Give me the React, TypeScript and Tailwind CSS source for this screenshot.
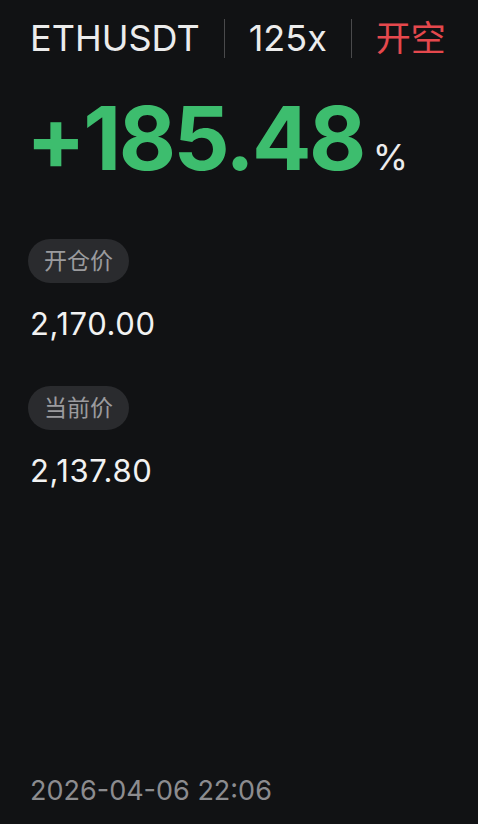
import React from 'react';

const sans = "font-['Inter','Noto_Sans_CJK_SC',sans-serif]";

function PriceBlock({ label, value }: { label: string; value: string }) {
  return (
    <div className="flex flex-col items-start">
      <span className="-ml-[2px] flex h-[44px] items-center rounded-full bg-[#2a2b2e] px-[16px] text-[23px] text-[#9b9b9e]">
        {label}
      </span>
      <span className="mt-[25px] text-[31px] leading-none tracking-[0.6px] text-[#f2f2f2]">{value}</span>
    </div>
  );
}

export default function App() {
  return (
    <div className={`${sans} flex h-[824px] w-[478px] flex-col bg-[#111214] px-[30px]`}>
      <div className="mt-[18px] flex h-[40px] items-center">
        <span className="text-[36px] leading-none text-[#ececec]">ETHUSDT</span>
        <span className="mx-[24px] h-[39px] w-px bg-[#4a4a4c]" />
        <span className="text-[36px] leading-none text-[#ececec]">125x</span>
        <span className="mx-[24px] h-[39px] w-px bg-[#4a4a4c]" />
        <span className="text-[35px] leading-none text-[#e5484d]">开空</span>
      </div>

      <div className="mt-[36px] flex items-baseline">
        <span className="-ml-[4px] text-[88px] font-bold leading-none tracking-[-2.5px] text-[#3dbd6e]">+185.48</span>
        <span className="ml-[9px] text-[36px] leading-none text-[#ececec]">%</span>
      </div>

      <div className="mt-[57px] flex flex-col gap-[47px]">
        <PriceBlock label="开仓价" value="2,170.00" />
        <PriceBlock label="当前价" value="2,137.80" />
      </div>

      <div className="mt-auto mb-[20px] text-[27px] leading-none text-[#8c8c8f]">2026-04-06 22:06</div>
    </div>
  );
}
